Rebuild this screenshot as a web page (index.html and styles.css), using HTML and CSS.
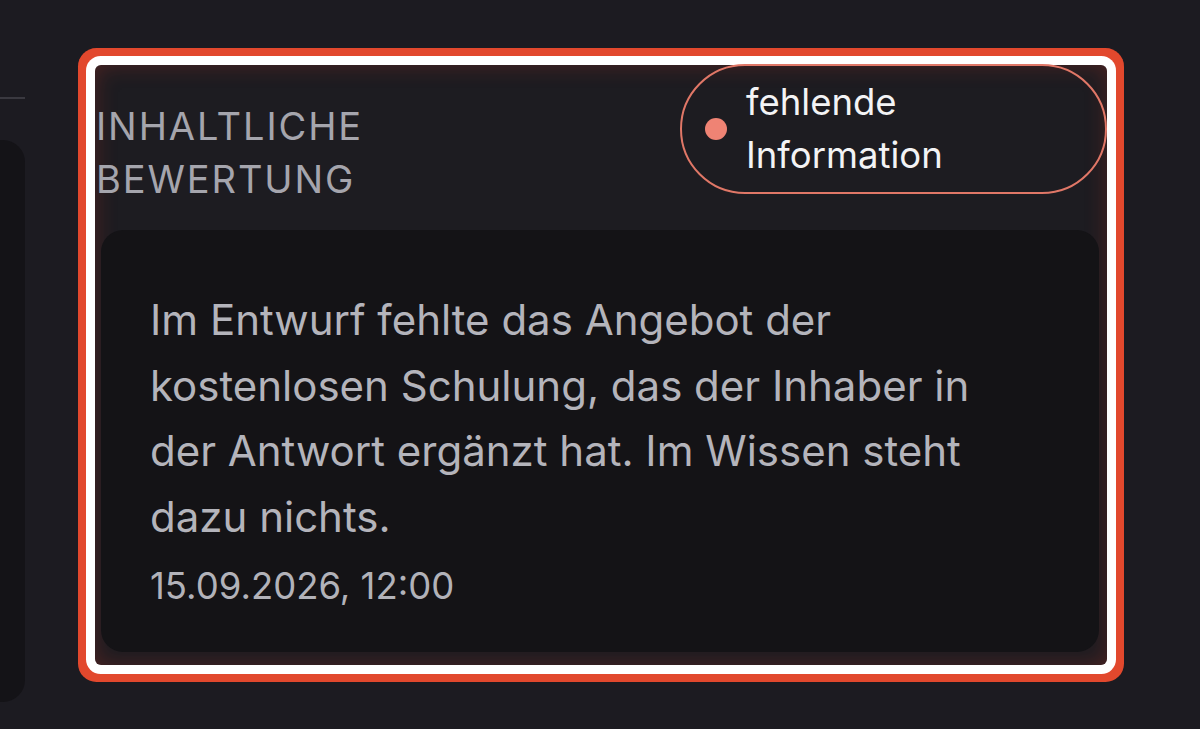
FILE: index.html
```html
<!DOCTYPE html>
<html lang="de">
<head>
<meta charset="utf-8">
<title>Inhaltliche Bewertung</title>
<link rel="stylesheet" href="styles.css">
</head>
<body>
<div class="page">
  <aside class="side">
    <div class="side-rule"></div>
    <div class="side-panel"></div>
  </aside>
  <section class="card">
    <header class="card-head">
      <h2 class="label">Inhaltliche Bewertung</h2>
      <div class="pill"><span class="dot"></span><span class="pill-text">fehlende Information</span></div>
    </header>
    <div class="note">
      <p class="note-text">Im Entwurf fehlte das Angebot der kostenlosen Schulung, das der Inhaber in der Antwort ergänzt hat. Im Wissen steht dazu nichts.</p>
      <div class="note-date">15.09.2026, 12:00</div>
    </div>
  </section>
</div>
</body>
</html>
```
FILE: styles.css
```css
html, body {
  margin: 0;
  padding: 0;
  background: #1c1b21;
  font-family: Inter, "Noto Sans", sans-serif;
}
.page {
  display: flex;
  align-items: flex-start;
  height: 729px;
  overflow: hidden;
}
.side {
  width: 25px;
  flex: none;
  display: flex;
  flex-direction: column;
}
.side-rule {
  margin-top: 97px;
  height: 2px;
  background: #3a3940;
}
.side-panel {
  margin-top: 41px;
  height: 562px;
  background: #141317;
  border-radius: 0 22px 22px 0;
}
.card {
  margin-left: 70px;
  margin-top: 65px;
  width: 1012px;
  height: 600px;
  box-sizing: border-box;
  border-radius: 6px;
  background: #1d1c21;
  box-shadow: 0 0 0 9px #ffffff, 0 0 0 17px #e2482d, inset 0 0 22px rgba(200, 55, 35, 0.28);
  display: flex;
  flex-direction: column;
}
.card-head {
  display: flex;
  justify-content: space-between;
  align-items: flex-start;
}
.label {
  margin: 35px 0 0 1px;
  font-size: 38px;
  line-height: 53px;
  font-weight: 400;
  letter-spacing: 0.05em;
  text-transform: uppercase;
  color: #a5a5ad;
  width: 300px;
}
.pill {
  margin-top: -1px;
  width: 427px;
  height: 130px;
  box-sizing: border-box;
  border: 2px solid #e07767;
  border-radius: 65px;
  display: flex;
  align-items: center;
  padding-left: 23px;
  gap: 19px;
}
.dot {
  width: 22px;
  height: 22px;
  border-radius: 50%;
  background: #ef8374;
  flex: none;
}
.pill-text {
  width: 220px;
  font-size: 36.5px;
  line-height: 53px;
  color: #f3f3f5;
}
.note {
  margin: 24px 8px 0 6px;
  height: 422px;
  box-sizing: border-box;
  background: #141316;
  border-radius: 22px;
  padding: 57px 99px 0 49px;
}
.note-text {
  margin: 0;
  font-size: 42px;
  line-height: 65.7px;
  color: #b4b4bb;
}
.note-date {
  margin-top: 12px;
  font-size: 36.5px;
  line-height: 48px;
  color: #b2b2b9;
}
```
